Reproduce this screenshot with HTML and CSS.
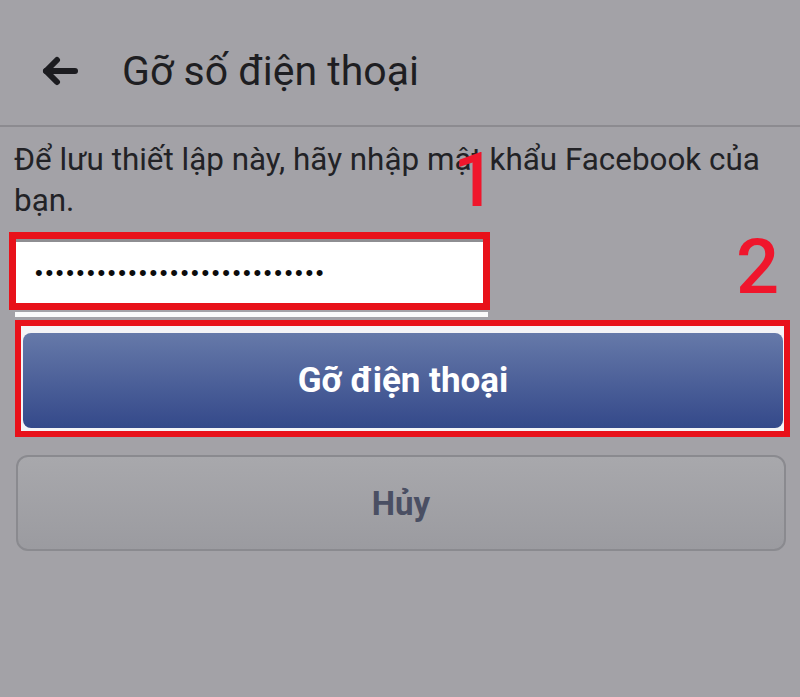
FILE: index.html
```html
<!DOCTYPE html>
<html lang="vi">
<head>
  <meta charset="UTF-8">
  <title>Gỡ số điện thoại</title>
  <link rel="stylesheet" href="styles.css">
</head>
<body>
  <div class="screen">
    <header class="topbar">
      <svg class="back" width="36" height="30" viewBox="0 0 36 30" aria-hidden="true">
        <polyline points="15,4 4,15 15,26" />
        <line x1="4" y1="15" x2="33" y2="15" />
      </svg>
      <h1>Gỡ số điện thoại</h1>
    </header>
    <main class="form">
      <p class="hint">Để lưu thiết lập này, hãy nhập mật khẩu Facebook của bạn.</p>
      <div class="mark mark-field">
        <div class="field">••••••••••••••••••••••••••••</div>
      </div>
      <div class="field-tail"></div>
      <div class="mark mark-submit">
        <button class="btn-primary">Gỡ điện thoại</button>
      </div>
      <button class="btn-cancel">Hủy</button>
    </main>
    <!-- chú thích bước -->
    <span class="step step-1">1</span>
    <span class="step step-2">2</span>
  </div>
</body>
</html>
```

FILE: styles.css
```css
body { margin: 0; background: #a3a2a7; font-family: Roboto, "Noto Sans", sans-serif; color: #202024; }
.screen { position: relative; width: 800px; height: 697px; overflow: hidden; }
.topbar { display: flex; align-items: center; box-sizing: border-box; height: 127px; padding: 16px 0 0 42px; border-bottom: 2px solid #8c8b90; }
.back { fill: none; stroke: #1c1c20; stroke-width: 6; stroke-linecap: round; stroke-linejoin: round; }
.topbar h1 { margin: 0 0 0 44px; font-size: 41px; font-weight: 400; color: #1e1e22; }
.form { padding: 12px 0 0 0; }
.hint { margin: 0 10px 11px 14px; font-size: 31.4px; line-height: 41px; color: #222226; }
.mark { box-sizing: border-box; border: 7px solid #e8111a; }
.mark-field { width: 481px; height: 78px; margin-left: 9px; padding: 0; }
.field { box-sizing: border-box; height: 100%; background: #fff; border-top: 3px solid #8e8e92; padding-left: 19px; display: flex; align-items: center; font-family: "Liberation Sans", Arial, sans-serif; font-size: 22px; letter-spacing: 2.7px; color: #0c0c0c; }
.field-tail { width: 473px; height: 5px; margin: 2px 0 3px 15px; background: #fafafa; }
.mark-submit { width: 775px; height: 117px; margin-left: 15px; border-width: 6px; padding: 7px 1px 3px 2px; background: #f4f4f6; }
.btn-primary { display: block; width: 100%; height: 100%; border: none; border-radius: 8px; background: linear-gradient(#6679a9, #34498a); color: #fff; font-family: Roboto, sans-serif; font-size: 35px; font-weight: 700; cursor: pointer; }
.btn-cancel { display: block; box-sizing: border-box; width: 770px; height: 96px; margin: 18px 0 0 16px; border: 2px solid #8a8a8f; border-radius: 12px; background: linear-gradient(#a8a8ac, #9b9ba0); color: #4a4f63; font-family: Roboto, sans-serif; font-size: 33px; font-weight: 700; cursor: pointer; }
.step { position: absolute; font-size: 76px; line-height: 1; font-weight: 500; color: #f0162c; }
.step-1 { left: 453px; top: 142px; }
.step-2 { left: 736px; top: 229px; }
```
